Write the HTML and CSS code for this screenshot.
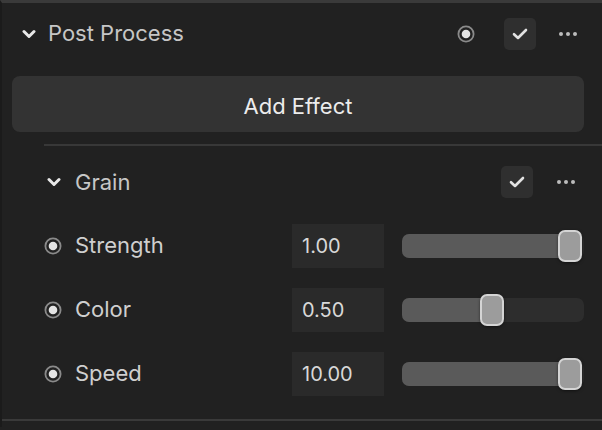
FILE: index.html
```html
<!DOCTYPE html>
<html>
<head>
<meta charset="utf-8">
<link rel="stylesheet" href="styles.css">
</head>
<body>
<div class="panel">
  <div class="header">
    <svg class="chev" width="14" height="10" viewBox="0 0 14 10"><path d="M2 2.5 L7 7.5 L12 2.5" fill="none" stroke="#e8e8e8" stroke-width="3" stroke-linecap="round" stroke-linejoin="round"/></svg>
    <span class="title">Post Process</span>
    <span class="spacer"></span>
    <svg class="radio hdr-radio" width="18" height="18" viewBox="0 0 18 18"><circle cx="9" cy="9" r="7.6" fill="none" stroke="#8a8a8a" stroke-width="1.8"/><circle cx="9" cy="9" r="4.3" fill="#e4e4e4"/></svg>
    <div class="check"><svg width="16" height="12" viewBox="0 0 16 12"><path d="M2 6.2 L6 10 L14 2" fill="none" stroke="#e2e2e2" stroke-width="2.6" stroke-linecap="round" stroke-linejoin="round"/></svg></div>
    <div class="dots"><i></i><i></i><i></i></div>
  </div>
  <div class="add">Add Effect</div>
  <div class="sep"></div>
  <div class="effect">
    <div class="ehead">
      <svg class="chev" width="14" height="10" viewBox="0 0 14 10"><path d="M2 2.5 L7 7.5 L12 2.5" fill="none" stroke="#e8e8e8" stroke-width="3" stroke-linecap="round" stroke-linejoin="round"/></svg>
      <span class="etitle">Grain</span>
      <span class="spacer"></span>
      <div class="check"><svg width="16" height="12" viewBox="0 0 16 12"><path d="M2 6.2 L6 10 L14 2" fill="none" stroke="#e2e2e2" stroke-width="2.6" stroke-linecap="round" stroke-linejoin="round"/></svg></div>
      <div class="dots"><i></i><i></i><i></i></div>
    </div>
    <div class="param">
      <svg class="radio" width="18" height="18" viewBox="0 0 18 18"><circle cx="9" cy="9" r="7.6" fill="none" stroke="#8a8a8a" stroke-width="1.8"/><circle cx="9" cy="9" r="4.3" fill="#e4e4e4"/></svg>
      <span class="label">Strength</span>
      <div class="num">1.00</div>
      <div class="slider"><div class="fill" style="width:92%"></div><div class="thumb" style="left:156px"></div></div>
    </div>
    <div class="param">
      <svg class="radio" width="18" height="18" viewBox="0 0 18 18"><circle cx="9" cy="9" r="7.6" fill="none" stroke="#8a8a8a" stroke-width="1.8"/><circle cx="9" cy="9" r="4.3" fill="#e4e4e4"/></svg>
      <span class="label">Color</span>
      <div class="num">0.50</div>
      <div class="slider"><div class="fill" style="width:50%"></div><div class="thumb" style="left:78px"></div></div>
    </div>
    <div class="param">
      <svg class="radio" width="18" height="18" viewBox="0 0 18 18"><circle cx="9" cy="9" r="7.6" fill="none" stroke="#8a8a8a" stroke-width="1.8"/><circle cx="9" cy="9" r="4.3" fill="#e4e4e4"/></svg>
      <span class="label">Speed</span>
      <div class="num">10.00</div>
      <div class="slider"><div class="fill" style="width:92%"></div><div class="thumb" style="left:156px"></div></div>
    </div>
  </div>
  <div class="bottom"></div>
</div>
</body>
</html>
```

FILE: styles.css
```css
html, body {
  margin: 0;
  padding: 0;
  background: #212121;
  width: 602px;
  height: 430px;
  overflow: hidden;
  font-family: Inter, "Noto Sans", sans-serif;
}
.panel {
  border-top: 3px solid #3a3a3a;
  border-left: 2px solid #1b1b1b;
  height: 427px;
  box-sizing: border-box;
  display: flex;
  flex-direction: column;
}
.header {
  height: 62px;
  display: flex;
  align-items: center;
  padding-left: 20px;
}
.chev { display: block; flex: none; }
.title {
  margin-left: 12px;
  font-size: 22px;
  color: #c6c6c6;
  padding-bottom: 2px;
}
.spacer { flex: 1; }
.hdr-radio { margin-right: 29px; }
.radio { display: block; flex: none; }
.check {
  width: 32px;
  height: 32px;
  border-radius: 5px;
  background: #2f2f2f;
  display: flex;
  align-items: center;
  justify-content: center;
}
.check svg { display: block; }
.dots {
  width: 20px;
  margin-left: 22px;
  margin-right: 24px;
  display: flex;
  gap: 3px;
  justify-content: center;
}
.dots i {
  width: 4px;
  height: 4px;
  border-radius: 50%;
  background: #bcbcbc;
}
.add {
  margin: 11px 18px 0 10px;
  height: 56px;
  box-sizing: border-box;
  padding-top: 3px;
  border-radius: 8px;
  background: #333333;
  color: #ececec;
  font-size: 22px;
  display: flex;
  align-items: center;
  justify-content: center;
}
.sep {
  margin: 12px 0 0 42px;
  height: 2px;
  background: #383838;
}
.effect {
  padding-left: 42px;
  flex: 1;
}
.ehead {
  margin-top: 20px;
  height: 32px;
  display: flex;
  align-items: center;
  padding-left: 3px;
}
.ehead .dots { margin-left: 23px; margin-right: 26px; }
.etitle {
  margin-left: 14px;
  font-size: 22px;
  color: #c6c6c6;
}
.param {
  margin-top: 20px;
  height: 44px;
  display: flex;
  align-items: center;
}
.ehead + .param { margin-top: 26px; }
.label {
  margin-left: 13px;
  width: 217px;
  font-size: 22px;
  color: #cfcfcf;
  padding-bottom: 3px;
}
.num {
  width: 92px;
  height: 44px;
  box-sizing: border-box;
  padding-left: 10px;
  background: #2a2a2a;
  color: #d8d8d8;
  font-size: 20px;
  display: flex;
  align-items: center;
}
.slider {
  position: relative;
  margin-left: 18px;
  width: 182px;
  height: 24px;
  border-radius: 7px;
  background: #2d2d2d;
}
.fill {
  height: 24px;
  border-radius: 7px 0 0 7px;
  background: #5a5a5a;
}
.thumb {
  position: absolute;
  top: -4px;
  width: 24px;
  height: 32px;
  box-sizing: border-box;
  border: 2px solid #d4d4d4;
  border-radius: 7px;
  background: #9c9c9c;
  box-shadow: 0 1px 3px rgba(0,0,0,0.5);
}
.bottom {
  height: 2px;
  background: #3a3a3a;
  margin-bottom: 6px;
}
```
